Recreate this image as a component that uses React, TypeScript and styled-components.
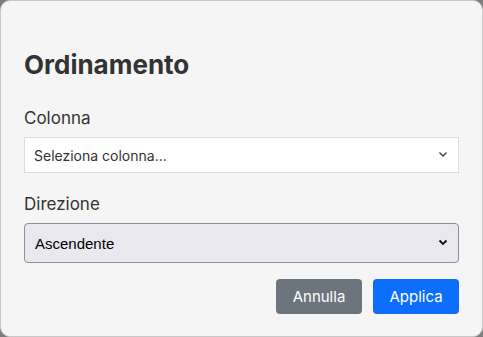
import React from 'react'
import styled, { createGlobalStyle } from 'styled-components';

const GlobalStyle = createGlobalStyle`
  html, body {
    margin: 0;
    padding: 0;
    background: #7d7d7d;
  }
  body {
    font-family: Inter, "Noto Sans", sans-serif;
    color: #333;
  }
`;

const Dialog = styled.div`
  box-sizing: border-box;
  width: 483px;
  height: 337px;
  background: #f4f5f4;
  border: 1px solid #c6c7c6;
  border-radius: 10px;
  padding: 46px 23px 22px 23px;
  display: flex;
  flex-direction: column;
`;

const Title = styled.h2`
  margin: 0 0 24px 0;
  font-size: 26px;
  font-weight: 700;
  line-height: 36px;
  color: #333;
`;

const Field = styled.div`
  display: flex;
  flex-direction: column;
  margin-bottom: ${(p: { gap?: number }) => p.gap ?? 20}px;
`;

const Label = styled.label`
  font-size: 17px;
  line-height: 22px;
  color: #333;
  margin-bottom: 8px;
`;

const SelectBox = styled.div<{ $native?: boolean }>`
  position: relative;
  box-sizing: border-box;
  height: ${(p) => (p.$native ? 40 : 36)}px;
  display: flex;
  align-items: center;
  padding-left: ${(p) => (p.$native ? 10 : 9)}px;
  background: ${(p) => (p.$native ? '#e9e8ee' : '#fff')};
  border: 1px solid ${(p) => (p.$native ? '#8f8f9d' : '#dcdedd')};
  border-radius: ${(p) => (p.$native ? 4 : 0)}px;
  font-family: ${(p) => (p.$native ? '"Liberation Sans", Arial, sans-serif' : 'Inter, sans-serif')};
  font-size: ${(p) => (p.$native ? 15 : 14)}px;
  color: ${(p) => (p.$native ? '#000' : '#333')};
`;

const Chevron = styled.svg`
  position: absolute;
  right: 10px;
  top: 50%;
  margin-top: -4px;
`;

const Actions = styled.div`
  display: flex;
  justify-content: flex-end;
  gap: 11px;
`;

const Button = styled.button<{ $primary?: boolean }>`
  width: 86px;
  height: 35px;
  border: none;
  border-radius: 4px;
  font-family: Inter, sans-serif;
  font-size: 15px;
  color: #fff;
  background: ${(p) => (p.$primary ? '#0d6efd' : '#6c757d')};
`;

const Select = ({ text, native }: { text: string; native?: boolean }) => (
  <SelectBox $native={native}>
    {text}
    <Chevron width="10" height="7" viewBox="0 0 10 7">
      <path d="M1.5 1.5 L5 5 L8.5 1.5" fill="none" stroke={native ? '#111' : '#444'} strokeWidth={native ? 1.8 : 1.4} />
    </Chevron>
  </SelectBox>
);

export default function App() {
  return (
    <>
      <GlobalStyle />
      <Dialog>
        <Title>Ordinamento</Title>
        <Field>
          <Label>Colonna</Label>
          <Select text="Seleziona colonna..." />
        </Field>
        <Field gap={16}>
          <Label>Direzione</Label>
          <Select text="Ascendente" native />
        </Field>
        <Actions>
          <Button>Annulla</Button>
          <Button $primary>Applica</Button>
        </Actions>
      </Dialog>
    </>
  );
}
